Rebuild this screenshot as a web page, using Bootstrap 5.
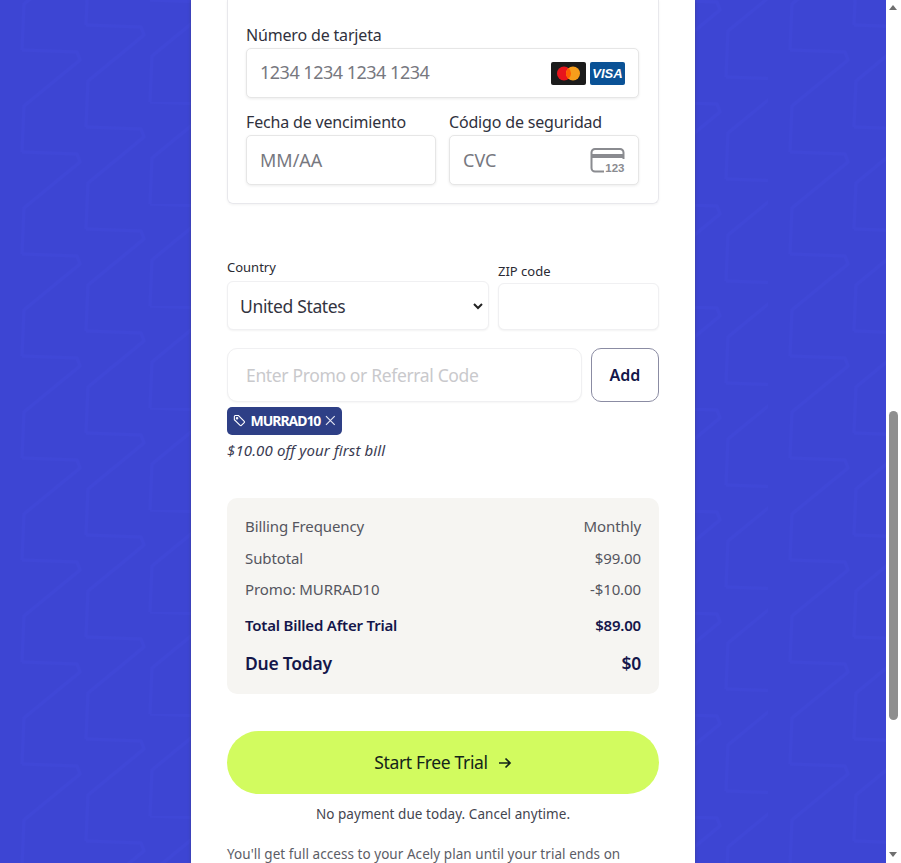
<!doctype html>
<html lang="es">
<head>
<meta charset="utf-8">
<title>Acely checkout</title>
<link href="https://cdn.jsdelivr.net/npm/bootstrap@5.3.0/dist/css/bootstrap.min.css" rel="stylesheet">
<style>
html,body{height:863px;overflow:hidden;background:#fff}
body{font-family:"Noto Sans","Open Sans",sans-serif;color:#1e1e2e}
.shell{height:863px}
.stage{width:886px;height:863px;overflow:hidden;background-color:#3d45d3;
background-image:url("data:image/svg+xml,%3Csvg xmlns='http://www.w3.org/2000/svg' xmlns:xlink='http://www.w3.org/1999/xlink' width='256' height='102'%3E%3Cdefs%3E%3Cpath id='z' d='M0 0L55 2L58 10L2 56L0 102' fill='none' stroke='%233f47d7' stroke-width='3' stroke-linejoin='round'/%3E%3C/defs%3E%3Cuse xlink:href='%23z' x='22' y='50'/%3E%3Cuse xlink:href='%23z' x='22' y='-52'/%3E%3Cuse xlink:href='%23z' x='86' y='25'/%3E%3Cuse xlink:href='%23z' x='86' y='-77'/%3E%3Cuse xlink:href='%23z' x='150' y='0'/%3E%3Cuse xlink:href='%23z' x='150' y='-102'/%3E%3Cuse xlink:href='%23z' x='214' y='77'/%3E%3Cuse xlink:href='%23z' x='214' y='-25'/%3E%3C/svg%3E")}
.panel{width:504px;height:863px;background:#fff;padding:0 36px;overflow:hidden;box-shadow:0 0 3px rgba(60,60,90,.5)}
.fakebar{width:15px;height:863px;background:#fff;position:relative}
.fakethumb{position:absolute;left:3px;top:411px;width:9px;height:309px;border-radius:5px;background:#8f8f8f}
.fakeup,.fakedown{position:absolute;left:3px;width:0;height:0;border-left:4.5px solid transparent;border-right:4.5px solid transparent}
.fakeup{top:5px;border-bottom:5px solid #6f6f6f}
.fakedown{top:852px;border-top:5px solid #6f6f6f}
.paybox{width:432px;height:204px;border:1px solid #e8e8ec;border-top:0;border-radius:0 0 6px 6px;padding:24px 19px 0 18px;box-shadow:0 1px 3px rgba(0,0,0,.05)}
.paylabel{font-size:16px;line-height:22px;margin-bottom:2px;color:#30313d;letter-spacing:-.17px;white-space:nowrap}
.payfield{height:50px;border:1px solid #e6e6e6;border-radius:5px;box-shadow:0 1px 3px rgba(0,0,0,.08);padding:0 13px;font-size:18px;color:#77787f;background:#fff}
.cardnum{letter-spacing:-.5px;margin-top:-1px}
.paygap{margin-top:13px}
.paycols{gap:13px}
.paycol{width:190px}
.addr{margin-top:54px;gap:9px}
.addrlabel{font-size:13px;line-height:18px;margin-bottom:5px;color:#2a2a33}
.addrlabel.zip{margin-bottom:3px}
.form-select.cselect{width:262px;height:49px;font-size:17.5px;letter-spacing:-.35px;color:#33343f;border:1px solid #f0f0f2;border-radius:6px;padding:2px 28px 0 12px;box-shadow:0 1px 2px rgba(0,0,0,.05);background-position:right 4px center;background-size:12px;
background-image:url("data:image/svg+xml,%3Csvg xmlns='http://www.w3.org/2000/svg' viewBox='0 0 12 12'%3E%3Cpath d='M2 4 L6 8 L10 4' fill='none' stroke='%23222' stroke-width='2'/%3E%3C/svg%3E")}
.form-control.zipin{width:161px;height:47px;border:1px solid #f0f0f2;border-radius:6px;box-shadow:0 1px 2px rgba(0,0,0,.05)}
.promo{margin-top:18px;gap:9px}
.form-control.promoin{width:355px;height:54px;border:1px solid #f0f0f2;border-radius:10px;padding:0 18px;font-size:17.5px;letter-spacing:-.35px;box-shadow:0 1px 2px rgba(0,0,0,.04)}
.form-control.promoin::placeholder{color:#c9c9cc;opacity:1}
.btn.addbtn{width:68px;height:54px;border:1px solid #8b8ca3;border-radius:10px;color:#14164a;font-weight:600;font-size:16px;padding:0}
.chipy{margin-top:5px;width:115px;height:28px;background:#2e3f86;color:#fff;border-radius:5px;font-size:14px;font-weight:700;padding:0 6px 1px;gap:5px;letter-spacing:-1.05px}
.offtext{margin-top:4px;font-size:15px;line-height:22px;font-style:italic;color:#3a3b52;letter-spacing:.12px}
.summ{margin-top:37px;width:432px;height:196px;background:#f6f5f2;border-radius:10px;padding:17px 18px 0;font-size:15px;color:#55565f;letter-spacing:-.1px}
.summ>div{line-height:22px}
.r2{margin-top:10px}
.r3{margin-top:9px}
.r4{margin-top:14px;color:#14164a;font-weight:600;letter-spacing:-.2px}
.r5{margin-top:14px;color:#14164a;font-weight:600;font-size:17.5px;letter-spacing:-.25px;line-height:26px!important}
.btn.gobtn{margin-top:37px;width:432px;height:63px;border-radius:32px;background:#d2fb5f;border:0;font-size:17.5px;letter-spacing:-.35px;color:#14241a;gap:10px}
.nopay{margin-top:10px;font-size:13.5px;line-height:20px;color:#44454f;letter-spacing:.05px}
.terms{margin-top:19px;width:432px;font-size:13.5px;line-height:22px;color:#5c5d66;letter-spacing:.05px}
</style>
</head>
<body>
<div class="shell d-flex">
  <div class="stage">
    <div class="panel mx-auto">
      <div class="paybox">
        <div class="paylabel">Número de tarjeta</div>
        <div class="payfield d-flex align-items-center justify-content-between">
          <span class="cardnum">1234 1234 1234 1234</span>
          <span class="d-flex gap-1">
            <svg width="35" height="23" viewBox="0 0 35 23"><rect width="35" height="23" rx="2" fill="#1b1b1b"/><circle cx="13" cy="11.5" r="7" fill="#e8141c"/><circle cx="22" cy="11.5" r="7" fill="#f79e1b"/><path d="M17.5 6.1a7 7 0 0 1 0 10.8a7 7 0 0 1 0-10.8z" fill="#ff5f00"/></svg>
            <svg width="35" height="23" viewBox="0 0 35 23"><rect width="35" height="23" rx="2" fill="#0a5296"/><text x="17.5" y="16" text-anchor="middle" font-family="Liberation Sans,sans-serif" font-size="13" font-weight="700" font-style="italic" fill="#fff">VISA</text></svg>
          </span>
        </div>
        <div class="d-flex paycols paygap">
          <div class="paycol">
            <div class="paylabel">Fecha de vencimiento</div>
            <div class="payfield d-flex align-items-center">MM/AA</div>
          </div>
          <div class="paycol">
            <div class="paylabel">Código de seguridad</div>
            <div class="payfield d-flex align-items-center justify-content-between">
              <span>CVC</span>
              <svg width="35" height="25" viewBox="0 0 35 25"><path d="M14 23.5H5a3.5 3.5 0 0 1-3.5-3.5V4.5A3.5 3.5 0 0 1 5 1h25a3.5 3.5 0 0 1 3.5 3.5V11" fill="none" stroke="#8a8b90" stroke-width="2"/><rect x="1" y="6" width="33" height="4" fill="#8a8b90"/><text x="34.5" y="23.5" text-anchor="end" font-family="Liberation Sans,sans-serif" font-size="11.5" font-weight="700" fill="#8a8b90">123</text></svg>
            </div>
          </div>
        </div>
      </div>

      <div class="d-flex addr align-items-end">
        <div>
          <div class="addrlabel">Country</div>
          <select class="form-select cselect"><option>United States</option></select>
        </div>
        <div>
          <div class="addrlabel zip">ZIP code</div>
          <input class="form-control zipin" type="text">
        </div>
      </div>

      <div class="d-flex promo">
        <input class="form-control promoin" type="text" placeholder="Enter Promo or Referral Code">
        <button class="btn addbtn" type="button">Add</button>
      </div>

      <div class="chipy d-flex align-items-center">
        <svg width="13" height="13" viewBox="0 0 14 14" fill="none" stroke="#fff" stroke-width="1.2"><path d="M1.5 2.5a1 1 0 0 1 1-1h3.6l6.4 6.4a1 1 0 0 1 0 1.4l-3.2 3.2a1 1 0 0 1-1.4 0L1.500 6.100z"/><circle cx="4.500" cy="4.500" r=".8"/></svg>
        <span>MURRAD10</span>
        <svg width="11" height="11" viewBox="0 0 11 11" stroke="#e6e8f4" stroke-width="1.200"><path d="M1 1l9 9M10 1l-9 9"/></svg>
      </div>
      <div class="offtext">$10.00 off your first bill</div>

      <div class="summ">
        <div class="d-flex justify-content-between"><span>Billing Frequency</span><span>Monthly</span></div>
        <div class="d-flex justify-content-between r2"><span>Subtotal</span><span>$99.00</span></div>
        <div class="d-flex justify-content-between r3"><span>Promo: MURRAD10</span><span>-$10.00</span></div>
        <div class="d-flex justify-content-between r4"><span>Total Billed After Trial</span><span>$89.00</span></div>
        <div class="d-flex justify-content-between r5"><span>Due Today</span><span>$0</span></div>
      </div>

      <button class="btn gobtn d-flex align-items-center justify-content-center" type="button">
        <span>Start Free Trial</span>
        <svg width="14" height="12" viewBox="0 0 14 12" fill="none" stroke="#14241a" stroke-width="1.700"><path d="M1 6h11M7.500 1.500L12 6l-4.500 4.500"/></svg>
      </button>
      <div class="nopay text-center">No payment due today. Cancel anytime.</div>
      <div class="terms">You'll get full access to your Acely plan until your trial ends on</div>
    </div>
  </div>
  <div class="fakebar">
    <div class="fakeup"></div>
    <div class="fakethumb"></div>
    <div class="fakedown"></div>
  </div>
</div>
</body>
</html>
